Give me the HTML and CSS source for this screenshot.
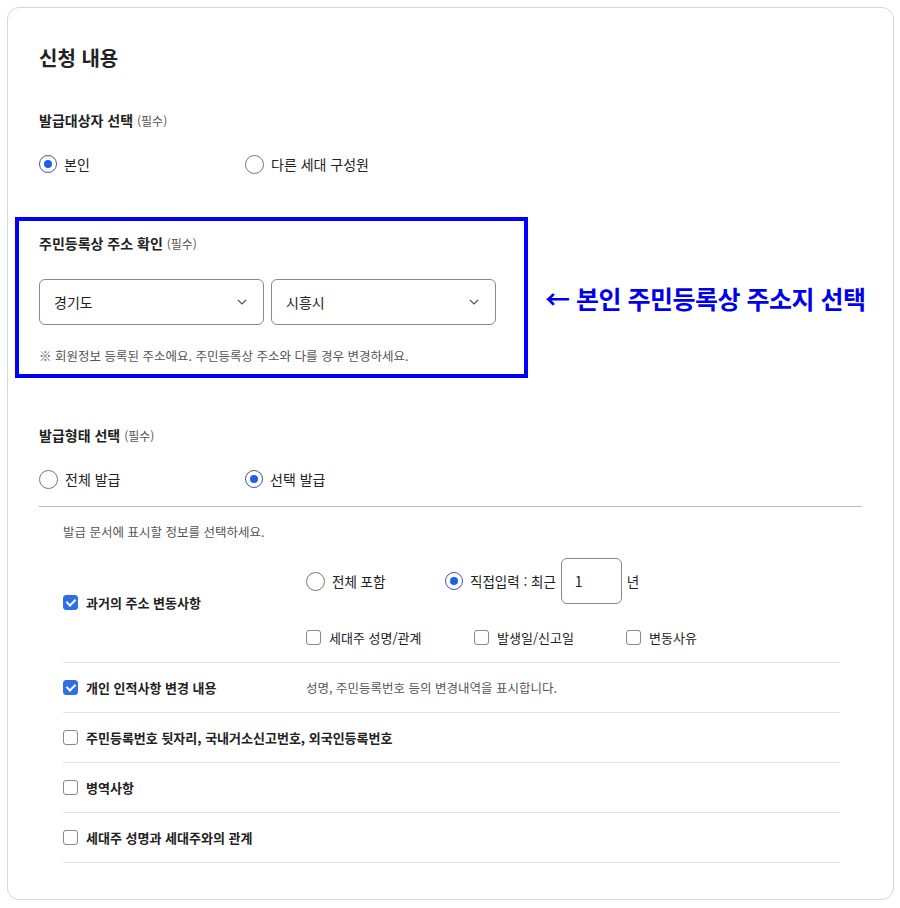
FILE: index.html
```html
<!DOCTYPE html>
<html lang="ko">
<head>
    <meta charset="UTF-8">
    <meta name="viewport" content="width=device-width, initial-scale=1.0">
    <title>신청 내용</title>
    <link rel="stylesheet" href="styles.css">
</head>
<body>
    <div class="card">
        <h2 class="title">신청 내용</h2>

        <!-- 발급대상자 -->
        <div class="field-label">발급대상자 선택 <span class="req">(필수)</span></div>
        <div class="radio-row">
            <label class="radio checked"><span class="dot"></span>본인</label>
            <label class="radio"><span class="dot"></span>다른 세대 구성원</label>
        </div>

        <!-- 주소 확인 (강조 박스) -->
        <div class="highlight-row">
            <div class="highlight-box">
                <div class="field-label">주민등록상 주소 확인 <span class="req">(필수)</span></div>
                <div class="select-row">
                    <div class="select">경기도<svg class="chev" width="10" height="6" viewBox="0 0 10 6"><path d="M1 1l4 4 4-4" fill="none" stroke="#555" stroke-width="1.2"/></svg></div>
                    <div class="select">시흥시<svg class="chev" width="10" height="6" viewBox="0 0 10 6"><path d="M1 1l4 4 4-4" fill="none" stroke="#555" stroke-width="1.2"/></svg></div>
                </div>
                <p class="note">※ 회원정보 등록된 주소에요. 주민등록상 주소와 다를 경우 변경하세요.</p>
            </div>
            <div class="annotation">← 본인 주민등록상 주소지 선택</div>
        </div>

        <!-- 발급형태 -->
        <div class="field-label second">발급형태 선택 <span class="req">(필수)</span></div>
        <div class="radio-row">
            <label class="radio"><span class="dot"></span>전체 발급</label>
            <label class="radio checked"><span class="dot"></span>선택 발급</label>
        </div>
        <hr class="divider">

        <div class="options">
            <p class="hint">발급 문서에 표시할 정보를 선택하세요.</p>

            <div class="opt-row first">
                <label class="check checked"><span class="box"></span>과거의 주소 변동사항</label>
                <div class="opt-detail">
                    <div class="sub-radios">
                        <label class="radio small w139"><span class="dot"></span>전체 포함</label>
                        <label class="radio small checked"><span class="dot"></span>직접입력 : 최근</label>
                        <div class="year-input">1</div>
                        <span class="unit">년</span>
                    </div>
                    <div class="sub-checks">
                        <label class="check plain w168"><span class="box"></span>세대주 성명/관계</label>
                        <label class="check plain w152"><span class="box"></span>발생일/신고일</label>
                        <label class="check plain"><span class="box"></span>변동사유</label>
                    </div>
                </div>
            </div>
            <div class="opt-row">
                <label class="check checked"><span class="box"></span>개인 인적사항 변경 내용</label>
                <div class="opt-desc">성명, 주민등록번호 등의 변경내역을 표시합니다.</div>
            </div>
            <div class="opt-row">
                <label class="check"><span class="box"></span>주민등록번호 뒷자리, 국내거소신고번호, 외국인등록번호</label>
            </div>
            <div class="opt-row">
                <label class="check"><span class="box"></span>병역사항</label>
            </div>
            <div class="opt-row">
                <label class="check"><span class="box"></span>세대주 성명과 세대주와의 관계</label>
            </div>
        </div>
    </div>
</body>
</html>
```

FILE: styles.css
```css
/* 기본 */
body {
    margin: 0;
    padding: 7px 6px 7px 7px;
    background: #fff;
    color: #222;
    font-family: "Noto Sans CJK KR", "Noto Sans", sans-serif;
}

.card {
    border: 1px solid #d6d6d6;
    border-radius: 12px;
    padding: 36px 31px 36px 31px;
    box-sizing: border-box;
    width: 887px;
    height: 893px;
}

.title {
    margin: 0;
    font-size: 20px;
    line-height: 28px;
    font-weight: 700;
}

.field-label {
    margin-top: 38px;
    font-size: 14px;
    line-height: 20px;
    font-weight: 700;
}

.field-label.second {
    margin-top: 47px;
}

.req {
    font-size: 12px;
    font-weight: 400;
    color: #555;
}

/* 라디오 */
.radio-row {
    display: flex;
    margin-top: 21px;
    height: 24px;
    align-items: center;
}

.radio {
    display: flex;
    align-items: center;
    font-size: 14px;
    color: #222;
}

.radio-row .radio:first-child {
    width: 206px;
}

.radio .dot {
    width: 17px;
    height: 17px;
    border: 1px solid #777;
    border-radius: 50%;
    margin-right: 7px;
    display: flex;
    align-items: center;
    justify-content: center;
    flex-shrink: 0;
}

.radio.checked .dot {
    border: 1.5px solid #3a55b5;
    width: 16px;
    height: 16px;
}

.radio.checked .dot::after {
    content: "";
    width: 8px;
    height: 8px;
    border-radius: 50%;
    background: #1f5fe6;
}

/* 강조 박스 */
.highlight-row {
    display: flex;
    align-items: center;
    margin: 41px 0 0 -24px;
}

.highlight-box {
    border: 4px solid #0000ff;
    padding: 12px 27px 9px 20px;
    width: 513px;
    box-sizing: border-box;
    flex-shrink: 0;
}

.highlight-box .field-label {
    margin-top: 0;
}

.select-row {
    display: flex;
    gap: 7px;
    margin-top: 25px;
}

.select {
    width: 225px;
    height: 46px;
    box-sizing: border-box;
    border: 1px solid #888;
    border-radius: 6px;
    padding: 0 16px 0 14px;
    display: flex;
    align-items: center;
    justify-content: space-between;
    font-size: 14px;
}

.note {
    margin: 22px 0 0;
    font-size: 12.5px;
    line-height: 18px;
    color: #555;
}

.annotation {
    margin-left: 17px;
    font-size: 25px;
    font-weight: 700;
    color: #0000ee;
    letter-spacing: -0.5px;
    white-space: nowrap;
}

.divider {
    border: none;
    border-top: 1px solid #bbb;
    margin: 15px 0 0;
}

/* 선택 항목 */
.options {
    padding: 0 22px 0 24px;
}

.hint {
    margin: 16px 0 0;
    font-size: 12.5px;
    line-height: 18px;
    color: #555;
}

.opt-row {
    display: flex;
    align-items: center;
    height: 50px;
    border-bottom: 1px solid #e3e3e3;
    box-sizing: border-box;
}

.opt-row.first {
    height: auto;
    padding: 17px 0 15px;
}

.opt-row > .check {
    width: 243px;
    flex-shrink: 0;
}

.check {
    display: flex;
    align-items: center;
    font-size: 13px;
    font-weight: 700;
    white-space: nowrap;
}

.check.plain {
    font-weight: 400;
}

.check .box {
    width: 13px;
    height: 13px;
    border: 1px solid #888;
    border-radius: 3px;
    margin-right: 8px;
    flex-shrink: 0;
    position: relative;
}

.check.checked .box {
    background: #2e6fe8;
    border-color: #2e6fe8;
}

.check.checked .box::after {
    content: "";
    position: absolute;
    left: 4px;
    top: 1px;
    width: 4px;
    height: 7px;
    border: solid #fff;
    border-width: 0 2px 2px 0;
    transform: rotate(45deg);
}

.opt-desc {
    font-size: 12.5px;
    color: #555;
}

.sub-radios {
    display: flex;
    align-items: center;
}

.radio.small {
    font-size: 13.5px;
}

.w139 { width: 139px; }
.w168 { width: 168px; }
.w152 { width: 152px; }

.year-input {
    width: 61px;
    height: 46px;
    box-sizing: border-box;
    border: 1px solid #888;
    border-radius: 6px;
    margin-left: 5px;
    padding-left: 13px;
    display: flex;
    align-items: center;
    font-size: 14px;
}

.unit {
    margin-left: 5px;
    font-size: 13.5px;
}

.sub-checks {
    display: flex;
    align-items: center;
    margin-top: 23px;
    height: 20px;
}
```
